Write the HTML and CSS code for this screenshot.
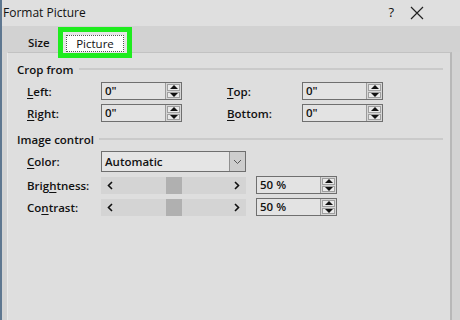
FILE: index.html
```html
<!DOCTYPE html>
<html>
<head>
<meta charset="utf-8">
<link rel="stylesheet" href="styles.css">
</head>
<body>
<div class="window">
  <div class="titlebar">
    <div class="title">Format Picture</div>
    <div class="title-btns">
      <span class="help">?</span>
      <svg class="close" width="14" height="14" viewBox="0 0 14 14"><path d="M1 1 L13 13 M13 1 L1 13" stroke="#222" stroke-width="1.2" fill="none"/></svg>
    </div>
  </div>
  <div class="tabstrip">
    <div class="tab">Size</div>
    <div class="tab active"><div class="focus">Picture</div></div>
  </div>
  <div class="panel">
    <div class="group-head"><span>Crop from</span><div class="rule"></div></div>
    <div class="crop-grid">
      <label class="lbl"><u>L</u>eft:</label>
      <div class="spin-input"><span class="val">0"</span><div class="spinner"><div class="up"></div><div class="down"></div></div></div>
      <label class="lbl lbl2"><u>T</u>op:</label>
      <div class="spin-input"><span class="val">0"</span><div class="spinner"><div class="up"></div><div class="down"></div></div></div>
      <label class="lbl"><u>R</u>ight:</label>
      <div class="spin-input"><span class="val">0"</span><div class="spinner"><div class="up"></div><div class="down"></div></div></div>
      <label class="lbl lbl2"><u>B</u>ottom:</label>
      <div class="spin-input"><span class="val">0"</span><div class="spinner"><div class="up"></div><div class="down"></div></div></div>
    </div>
    <div class="group-head gh2"><span>Image control</span><div class="rule"></div></div>
    <div class="img-grid">
      <label class="lbl"><u>C</u>olor:</label>
      <div class="dropdown"><span class="val">Automatic</span><div class="dd-btn"><svg width="9" height="6" viewBox="0 0 9 6"><path d="M1 1 L4.5 4.5 L8 1" stroke="#555" stroke-width="1" fill="none"/></svg></div></div>
      <div></div>
      <label class="lbl">Brig<u>h</u>tness:</label>
      <div class="slider">
        <svg width="7" height="9" viewBox="0 0 7 9"><path d="M5 1 L1.5 4.5 L5 8" stroke="#111" stroke-width="1.6" fill="none"/></svg>
        <div class="thumb"></div>
        <svg width="7" height="9" viewBox="0 0 7 9"><path d="M2 1 L5.5 4.5 L2 8" stroke="#111" stroke-width="1.6" fill="none"/></svg>
      </div>
      <div class="spin-input pct"><span class="val">50 %</span><div class="spinner"><div class="up"></div><div class="down"></div></div></div>
      <label class="lbl">Co<u>n</u>trast:</label>
      <div class="slider">
        <svg width="7" height="9" viewBox="0 0 7 9"><path d="M5 1 L1.5 4.5 L5 8" stroke="#111" stroke-width="1.6" fill="none"/></svg>
        <div class="thumb"></div>
        <svg width="7" height="9" viewBox="0 0 7 9"><path d="M2 1 L5.5 4.5 L2 8" stroke="#111" stroke-width="1.6" fill="none"/></svg>
      </div>
      <div class="spin-input pct"><span class="val">50 %</span><div class="spinner"><div class="up"></div><div class="down"></div></div></div>
    </div>
  </div>
</div>
</body>
</html>
```
FILE: styles.css
```css
* { box-sizing: border-box; }
html, body { margin: 0; padding: 0; }
body {
  width: 460px; height: 320px; overflow: hidden;
  background: #d3d3d3;
  font-family: "Open Sans", "Noto Sans", sans-serif;
  font-size: 11px;
  color: #111;
}
.window {
  height: 320px;
  border-left: 2px solid #5e7790;
  display: flex; flex-direction: column;
}
.titlebar {
  height: 26px; flex: none;
  background: #dfdfdf;
  display: flex; align-items: center; justify-content: space-between;
  padding-left: 1px;
}
.title { font-size: 12px; color: #111; margin-top: -1px; }
.title-btns { display: flex; align-items: center; gap: 16px; padding-right: 36px; }
.help { font-size: 13px; margin-top: -2px; }
.close { display: block; }
.tabstrip {
  height: 26px; flex: none;
  background: #d2d2d2;
  display: flex; align-items: flex-start;
  padding-left: 26px;
  position: relative; z-index: 1;
}
.tab {
  font-size: 11.5px; font-weight: 600;
  padding-top: 9px;
  width: 30px;
}
.tab.active {
  margin-top: 1px;
  height: 31px; width: 74px;
  padding: 3px 3px 3px 3px;
  border: 5px solid #1eec1e;
  background: #e6e6e6;
  margin-left: 0;
}
.focus {
  height: 17px;
  background: #fff;
  border: 1px dotted #555;
  font-weight: 500;
  text-align: center;
  line-height: 15px;
}
.panel {
  flex: 1;
  margin-left: 5px; width: 445px;
  background: #dedede;
  border-top: 1px solid #c2c2c2;
  border-left: 1px solid #e8e8e8;
  border-right: 2px solid #b8b8b8;
  padding-top: 8px;
}
.group-head {
  display: flex; align-items: center;
  padding-left: 9px; padding-right: 7px;
  height: 16px;
  font-size: 11.5px; font-weight: 600;
}
.group-head .rule { flex: 1; height: 2px; background: #cacaca; margin-left: 5px; }
.gh2 { margin-top: 9px; }
.crop-grid {
  display: grid;
  grid-template-columns: 74px 81px 120px 81px;
  grid-template-rows: 18px 18px;
  row-gap: 4px;
  padding-left: 19px;
  margin-top: 5px;
}
.crop-grid .lbl2 { margin-left: 45px; }
.lbl {
  font-size: 11.5px; font-weight: 600;
  display: flex; align-items: center;
}
.lbl u { text-decoration-thickness: 1px; text-underline-offset: 2px; }
.spin-input {
  display: flex;
  border: 1px solid #6f6f6f;
  background: #e3e3e3;
  height: 18px;
}
.spin-input .val {
  flex: 1; padding-left: 3px;
  font-size: 11.5px; font-weight: 600;
  line-height: 16px;
}
.spinner {
  width: 16px;
  display: flex; flex-direction: column;
  border-left: 1px solid #9a9a9a;
  background: #d6d6d6;
  padding: 1px;
  gap: 1px;
}
.spinner .up, .spinner .down {
  flex: 1; position: relative;
  border: 1px solid #9f9f9f;
  background: #e9e9e9;
}
.spinner .up::after, .spinner .down::after {
  content: ""; position: absolute; left: 50%; top: 50%;
  width: 0; height: 0; margin-left: -4px;
  border-left: 4px solid transparent; border-right: 4px solid transparent;
}
.spinner .up::after { border-bottom: 4px solid #111; margin-top: -2.5px; }
.spinner .down::after { border-top: 4px solid #111; margin-top: -1.5px; }
.img-grid {
  display: grid;
  grid-template-columns: 74px 155px 81px;
  grid-template-rows: 21px 17px 17px;
  row-gap: 5px;
  padding-left: 19px;
  margin-top: 4px;
}
.dropdown {
  width: 145px;
  display: flex;
  border: 1px solid #6f6f6f;
  background: #e5e5e5;
}
.dropdown .val { flex: 1; padding-left: 3px; font-size: 11.5px; font-weight: 600; line-height: 19px; }
.dd-btn {
  width: 16px;
  border-left: 1px solid #8f8f8f;
  background: #cdcdcd;
  display: flex; align-items: center; justify-content: center;
}
.slider {
  width: 145px;
  background: #d4d4d4;
  display: flex; align-items: center; justify-content: space-between;
  padding: 0 6px 0 6px;
}
.thumb { width: 16px; height: 17px; background: #b0b0b0; margin-left: 48px; margin-right: 47px; }
.pct { height: 18px; margin-top: -1px; }
```
